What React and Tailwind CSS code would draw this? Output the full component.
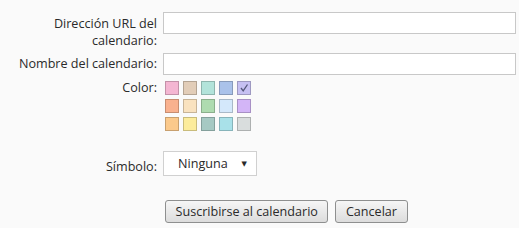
const swatches = [
  ["#f4b6d2", "#e2cdb8", "#b2e3da", "#aac2ea", "#c6c0f2"],
  ["#f9b18e", "#f9e2bf", "#aedbb0", "#d4e8fb", "#d3b5f7"],
  ["#fbc98b", "#fcec9c", "#a6c9c3", "#a9e1e9", "#d9dddd"],
];

export default function App() {
  return (
    <div
      className="w-[519px] h-[228px] bg-[#fafafa] text-[#2a2a2a] text-[12.6px] leading-[17px]"
      style={{ fontFamily: '"Open Sans", "DejaVu Sans", sans-serif' }}
    >
      <div className="grid grid-cols-[157px_1fr] gap-x-[6px] pt-[12px] pr-[3px]">
        <div className="text-right pt-[3px]">
          Dirección URL del
          <br />
          calendario:
        </div>
        <div>
          <input className="block w-full h-[22px] bg-white border border-[#c8c8c8] outline-none" />
        </div>

        <div className="text-right mt-[4px] pt-[2px]">Nombre del calendario:</div>
        <div className="mt-[4px]">
          <input className="block w-full h-[22px] bg-white border border-[#c8c8c8] outline-none" />
        </div>

        <div className="text-right mt-[4px]">Color:</div>
        <div className="mt-[6px] flex flex-col gap-[4px] pl-[2px]">
          {swatches.map((row, i) => (
            <div key={i} className="flex gap-[4px]">
              {row.map((c, j) => (
                <div
                  key={j}
                  className="w-[14px] h-[14px] border border-black/20 flex items-center justify-center"
                  style={{ backgroundColor: c }}
                >
                  {i === 0 && j === 4 ? (
                    <svg width="10" height="10" viewBox="0 0 10 10">
                      <path d="M2 5 L4.2 7.8 L8.5 1.5" fill="none" stroke="#55577a" strokeWidth="1.3" />
                    </svg>
                  ) : null}
                </div>
              ))}
            </div>
          ))}
        </div>

        <div className="text-right mt-[22px] pt-[5px]">Símbolo:</div>
        <div className="mt-[20px]">
          <div className="w-[94px] h-[25px] bg-white border border-[#d0d0d0] flex items-center justify-between pl-[14px] pr-[9px]">
            <span>Ninguna</span>
            <span className="text-[7px]">▼</span>
          </div>
        </div>

        <div></div>
        <div className="mt-[24px] flex gap-[7px] pl-[2px]">
          <button className="h-[23px] px-[9.5px] border border-[#8e8f8f] rounded-[3px] bg-gradient-to-b from-[#f6f6f6] to-[#dcdcdc]">
            Suscribirse al calendario
          </button>
          <button className="h-[23px] px-[9.5px] border border-[#8e8f8f] rounded-[3px] bg-gradient-to-b from-[#f6f6f6] to-[#dcdcdc]">
            Cancelar
          </button>
        </div>
      </div>
    </div>
  );
}
